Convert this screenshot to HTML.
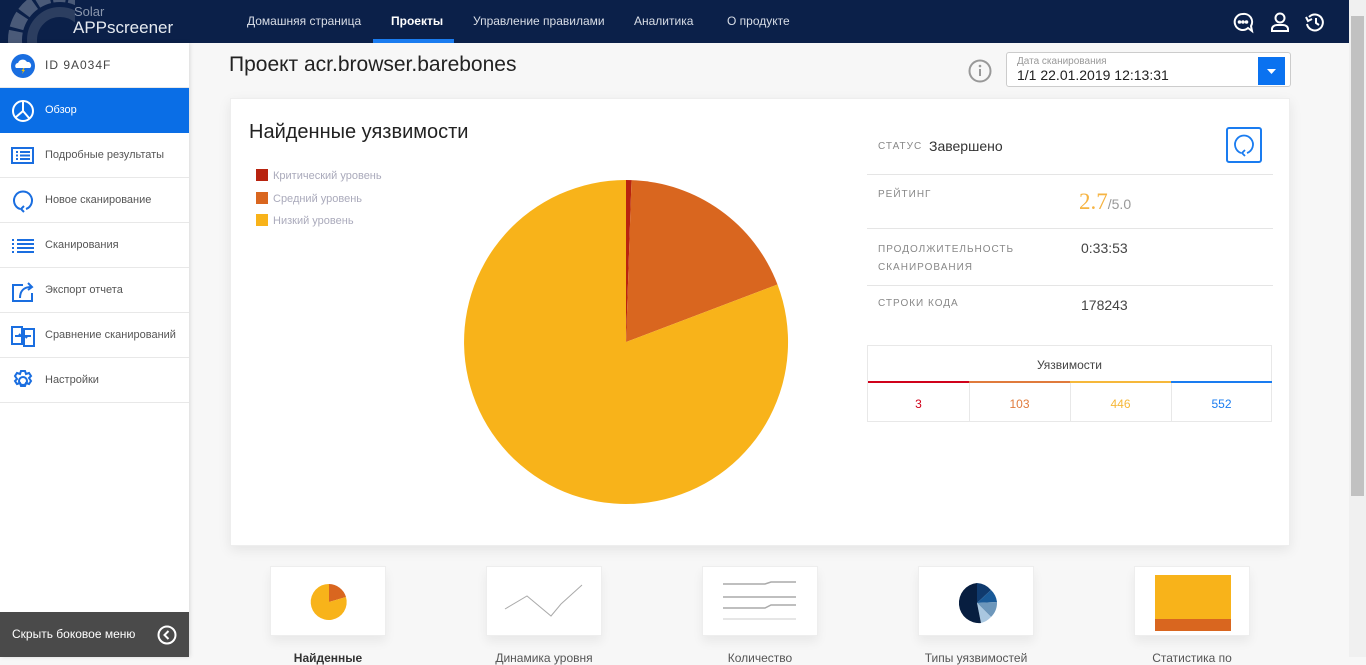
<!DOCTYPE html>
<html><head><meta charset="utf-8"><style>
*{margin:0;padding:0;box-sizing:border-box}
body{width:1366px;height:657px;overflow:hidden;background:#f7f7f7;font-family:"Liberation Sans",sans-serif;position:relative;color:#333}
.a{position:absolute}
.nav{left:0;top:0;width:1349px;height:43px;background:#0b2049}
.nav .l{top:0;font-size:12px;color:#d8dde6;line-height:43px}
.side{left:0;top:43px;width:189px;height:614px;background:#fff;box-shadow:1px 0 4px rgba(0,0,0,.12)}
.it{position:absolute;left:0;width:189px;height:45px;border-bottom:1px solid #e8e8e8;font-size:11px;color:#555;line-height:45px;padding-left:45px}
.it svg{position:absolute;left:11px;top:11px}
.card{left:230px;top:98px;width:1060px;height:448px;background:#fff;box-shadow:0 4px 12px rgba(0,0,0,.08);border:1px solid #eee}
.lbl{font-size:10px;color:#888;letter-spacing:1px}
.th{width:116px;height:70px;background:#fff;border:1px solid #eee;box-shadow:0 6px 10px rgba(0,0,0,.06);top:566px}
.tt{top:651px;font-size:12px;color:#555;width:160px;text-align:center}
</style></head><body>
<div class="a nav">
 <svg class="a" style="left:0;top:0" width="75" height="43"><circle cx="60" cy="40" r="45" fill="none" stroke="#4a5a78" stroke-width="14" stroke-dasharray="14 3"/><circle cx="60" cy="40" r="28" fill="none" stroke="#2c3e60" stroke-width="10"/></svg>
 <div class="a" style="left:74px;top:4px;font-size:13px;color:#8b97ad">Solar</div>
 <div class="a" style="left:73px;top:18px;font-size:17px;color:#e6eaf0">APPscreener</div>
 <div class="a l" style="left:247px">Домашняя страница</div>
 <div class="a l" style="left:391px;color:#fff;font-weight:bold">Проекты</div>
 <div class="a" style="left:373px;top:39px;width:81px;height:4px;background:#1a7cf0"></div>
 <div class="a l" style="left:473px">Управление правилами</div>
 <div class="a l" style="left:634px">Аналитика</div>
 <div class="a l" style="left:727px">О продукте</div>
 <svg class="a" style="left:1233px;top:12px" width="100" height="22" fill="none" stroke="#fff" stroke-width="2"><path d="M10 2a8 8 0 1 0 5 14l4 3-1-5a8 8 0 0 0-8-12z"/><circle cx="6.5" cy="10" r=".8" fill="#fff"/><circle cx="10" cy="10" r=".8" fill="#fff"/><circle cx="13.5" cy="10" r=".8" fill="#fff"/><circle cx="47" cy="6" r="4.5"/><path d="M39 19v-2a5 4 0 0 1 5-4h6a5 4 0 0 1 5 4v2z"/><path d="M76 5a8 8 0 1 1-2 7"/><path d="M73 5l2 4 4-2"/><path d="M83 6v5l3 2"/></svg>
</div>
<div class="a" style="left:1349px;top:0;width:17px;height:657px;background:#f0f0f0"></div>
<div class="a" style="left:1351px;top:16px;width:13px;height:480px;background:#c1c1c1"></div>
<div class="a side">
 <div class="it" style="top:0;color:#444;letter-spacing:1px;font-size:12px"><svg width="24" height="24"><circle cx="12" cy="12" r="12" fill="#1a6ee0"/><path d="M5 14a3 3 0 0 1 2-5 5 5 0 0 1 9-1 3.5 3.5 0 0 1 3 6z" fill="#fff"/><path d="M12.5 14l-2 3h1.5l-1 3 3-4h-1.5l1-2z" fill="#f4c20d"/></svg>ID 9A034F</div>
 <div class="it" style="top:45px;background:#0a6ee6;color:#fff;border:0"><svg width="24" height="24" fill="none" stroke="#fff" stroke-width="2"><circle cx="12" cy="12" r="10"/><path d="M12 2v10l-7 6M12 12l6 7"/></svg>Обзор</div>
 <div class="it" style="top:90px"><svg width="24" height="24" fill="none" stroke="#1a6ee0" stroke-width="2"><rect x="1" y="4" width="21" height="15"/><path d="M5 8h2M5 11.5h2M5 15h2M9 8h10M9 11.5h10M9 15h10"/></svg>Подробные результаты</div>
 <div class="it" style="top:135px"><svg width="24" height="24" fill="none" stroke="#1a6ee0" stroke-width="2"><path d="M9 20A9 9 0 1 1 15 20"/><path d="M13 17l-3 3 3 3"/></svg>Новое сканирование</div>
 <div class="it" style="top:180px"><svg width="24" height="24" fill="none" stroke="#1a6ee0" stroke-width="2"><path d="M1 6h2M1 10h2M1 14h2M1 18h2M6 6h17M6 10h17M6 14h17M6 18h17"/></svg>Сканирования</div>
 <div class="it" style="top:225px"><svg width="24" height="24" fill="none" stroke="#1a6ee0" stroke-width="2"><path d="M12 6H2v16h19v-8"/><path d="M9 19c0-7 4-11 11-11M17 4l4 4-4 3"/></svg>Экспорт отчета</div>
 <div class="it" style="top:270px"><svg width="24" height="24" fill="none" stroke="#1a6ee0" stroke-width="2"><rect x="1" y="3" width="10" height="17"/><rect x="13" y="5" width="10" height="17"/><path d="M4 12h6l-2-2M20 12h-6l2 2"/></svg>Сравнение сканирований</div>
 <div class="it" style="top:315px"><svg width="24" height="24" fill="none" stroke="#1a6ee0" stroke-width="2"><circle cx="12" cy="12" r="4"/><path d="M10 1h4l1 3 3-1 2 3-2 2 2 3-2 3-3-1-1 3h-4l-1-3-3 1-2-3 2-2-2-3 2-3 3 1z" transform="translate(0 1)"/></svg>Настройки</div>
 <div class="a" style="left:0;top:569px;width:189px;height:45px;background:#4a4a4a;color:#fff;font-size:12px;line-height:45px;padding-left:12px">Скрыть боковое меню
  <svg class="a" style="left:157px;top:13px" width="20" height="20" fill="none" stroke="#fff" stroke-width="2"><circle cx="10" cy="10" r="8.5"/><path d="M11.5 6l-4 4 4 4"/></svg></div>
</div>
<div class="a" style="left:229px;top:53px;font-size:21px;color:#222">Проект acr.browser.barebones</div>
<svg class="a" style="left:968px;top:59px" width="24" height="24"><circle cx="12" cy="12" r="10.5" fill="none" stroke="#999" stroke-width="2"/><rect x="11" y="10" width="2" height="7" fill="#999"/><circle cx="12" cy="7" r="1.3" fill="#999"/></svg>
<div class="a" style="left:1006px;top:52px;width:285px;height:35px;background:#fff;border:1px solid #ccc;border-radius:3px">
 <div class="a" style="left:10px;top:3px;font-size:10px;color:#999">Дата сканирования</div>
 <div class="a" style="left:10px;top:14px;font-size:14px;color:#222">1/1 22.01.2019 12:13:31</div>
 <div class="a" style="left:251px;top:4px;width:27px;height:28px;background:#0a72f0"><svg width="27" height="28"><path d="M9 12h9l-4.5 5z" fill="#fff"/></svg></div>
</div>
<div class="a card">
 <div class="a" style="left:18px;top:22px;font-size:20px;color:#222">Найденные уязвимости</div>
 <div class="a" style="left:25px;top:66px;font-size:11px;color:#aab;line-height:22.5px">
  <div><span style="display:inline-block;width:12px;height:12px;background:#b8230f;vertical-align:-2px;margin-right:5px"></span>Критический уровень</div>
  <div><span style="display:inline-block;width:12px;height:12px;background:#d9661f;vertical-align:-2px;margin-right:5px"></span>Средний уровень</div>
  <div><span style="display:inline-block;width:12px;height:12px;background:#f8b31a;vertical-align:-2px;margin-right:5px"></span>Низкий уровень</div>
 </div>
 <svg class="a" style="left:0;top:0" width="600" height="448"><g transform="translate(-231 -99)">
  <path d="M626 342L626 180A162 162 0 0 1 631.5 180.1Z" fill="#b8230f"/>
  <path d="M626 342L631.5 180.1A162 162 0 0 1 777.5 284.5Z" fill="#d9661f"/>
  <path d="M626 342L777.5 284.5A162 162 0 1 1 626 180Z" fill="#f8b31a"/></g></svg>
 <div class="a lbl" style="left:647px;top:42px">СТАТУС</div>
 <div class="a" style="left:698px;top:39px;font-size:14px;color:#333">Завершено</div>
 <div class="a" style="left:995px;top:28px;width:36px;height:36px;border:2px solid #1a7cf0;border-radius:3px"><svg width="32" height="32" fill="none" stroke="#1a7cf0" stroke-width="1.8"><path d="M13 24A9 9 0 1 1 19 24"/><path d="M17 21l-3 3 3 3"/></svg></div>
 <div class="a" style="left:636px;top:75px;width:406px;height:1px;background:#e5e5e5"></div>
 <div class="a lbl" style="left:647px;top:90px">РЕЙТИНГ</div>
 <div class="a" style="left:848px;top:90px;font-size:23px;color:#f6b443;font-family:'Liberation Serif',serif">2.7<span style="font-size:14px;color:#999;font-family:'Liberation Sans'">/5.0</span></div>
 <div class="a" style="left:636px;top:129px;width:406px;height:1px;background:#e5e5e5"></div>
 <div class="a lbl" style="left:647px;top:142px;line-height:18px">ПРОДОЛЖИТЕЛЬНОСТЬ<br>СКАНИРОВАНИЯ</div>
 <div class="a" style="left:850px;top:141px;font-size:14px;color:#444">0:33:53</div>
 <div class="a" style="left:636px;top:186px;width:406px;height:1px;background:#e5e5e5"></div>
 <div class="a lbl" style="left:647px;top:199px">СТРОКИ КОДА</div>
 <div class="a" style="left:850px;top:198px;font-size:14px;color:#444">178243</div>
 <div class="a" style="left:636px;top:246px;width:405px;height:77px;border:1px solid #e8e8e8">
  <div class="a" style="left:0;top:12px;width:403px;text-align:center;font-size:12px;color:#444">Уязвимости</div>
  <div class="a" style="left:0;top:35px;width:101px;height:2px;background:#d0021b"></div>
  <div class="a" style="left:101px;top:35px;width:101px;height:2px;background:#e07b3c"></div>
  <div class="a" style="left:202px;top:35px;width:101px;height:2px;background:#f6b83a"></div>
  <div class="a" style="left:303px;top:35px;width:101px;height:2px;background:#1a7cf0"></div>
  <div class="a" style="left:101px;top:37px;width:1px;height:38px;background:#e8e8e8"></div>
  <div class="a" style="left:202px;top:37px;width:1px;height:38px;background:#e8e8e8"></div>
  <div class="a" style="left:303px;top:37px;width:1px;height:38px;background:#e8e8e8"></div>
  <div class="a" style="left:0;top:51px;width:101px;text-align:center;font-size:12px;color:#d0021b">3</div>
  <div class="a" style="left:101px;top:51px;width:101px;text-align:center;font-size:12px;color:#e07b3c">103</div>
  <div class="a" style="left:202px;top:51px;width:101px;text-align:center;font-size:12px;color:#f6b83a">446</div>
  <div class="a" style="left:303px;top:51px;width:101px;text-align:center;font-size:12px;color:#1a7cf0">552</div>
 </div>
</div>
<div class="a th" style="left:270px"><svg width="116" height="70"><path d="M58 35L58 17A18 18 0 0 1 75 30Z" fill="#d9661f"/><path d="M58 35L75 30A18 18 0 1 1 58 17Z" fill="#f8b31a"/></svg></div>
<div class="a th" style="left:486px"><svg width="116" height="70"><path d="M18 42L40 29 64 49 74 37 95 18" fill="none" stroke="#aaa"/></svg></div>
<div class="a th" style="left:702px"><svg width="116" height="70" fill="none" stroke-width="1.5"><path d="M20 17h42l6-2h25M20 30h73M20 41h42l6-3h25" stroke="#aaa"/><path d="M20 52h73" stroke="#ddd"/></svg></div>
<div class="a th" style="left:918px"><svg width="116" height="70"><path d="M58 36L58 16A20 20 0 0 1 72 23Z" fill="#0f3a6e"/><path d="M58 36L72 23A20 20 0 0 1 78 35Z" fill="#195a98"/><path d="M58 36L78 35A20 20 0 0 1 72 50Z" fill="#6d97bb"/><path d="M58 36L72 50A20 20 0 0 1 62 56Z" fill="#a9c7e0"/><path d="M58 36L62 56A20 20 0 0 1 58 16Z" fill="#071e40"/></svg></div>
<div class="a th" style="left:1134px"><div class="a" style="left:20px;top:8px;width:76px;height:44px;background:#f8b31a"></div><div class="a" style="left:20px;top:52px;width:76px;height:12px;background:#d9661f"></div></div>
<div class="a tt" style="left:248px;font-weight:bold;color:#333">Найденные</div>
<div class="a tt" style="left:464px">Динамика уровня</div>
<div class="a tt" style="left:680px">Количество</div>
<div class="a tt" style="left:896px">Типы уязвимостей</div>
<div class="a tt" style="left:1112px">Статистика по</div>
</body></html>
